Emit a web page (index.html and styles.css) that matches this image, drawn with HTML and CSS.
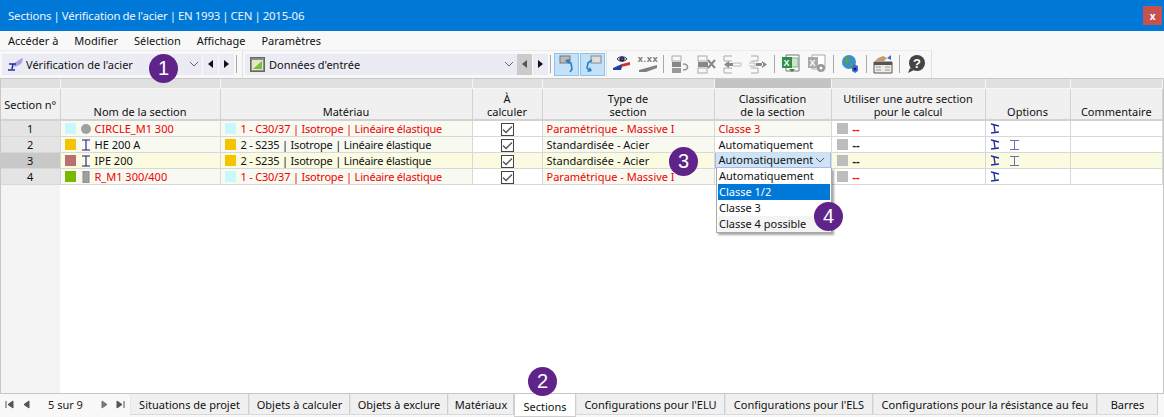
FILE: index.html
```html
<!DOCTYPE html>
<html lang="fr">
<head>
<meta charset="utf-8">
<title>Sections</title>
<link rel="stylesheet" href="styles.css">
</head>
<body>
<div class="app">
  <header class="titlebar">
    <span>Sections | Vérification de l'acier | EN 1993 | CEN | 2015-06</span>
    <span class="close">x</span>
  </header>
  <nav class="menu">
    <span>Accéder à</span><span>Modifier</span><span>Sélection</span><span>Affichage</span><span>Paramètres</span>
  </nav>
  <div class="toolbar">
    <div class="combo c1">
      <svg class="cico" width="16" height="14" viewBox="0 0 16 14"><path d="M5 7L14 1l1 1-2 5-6 3z" fill="#a6a2e6"/><path d="M1 7h7M5 7l-1 5M0 13h7" stroke="#2c2ca8" stroke-width="1.500" fill="none"/></svg>
      <span>Vérification de l'acier</span>
      <svg class="chev" width="10" height="6" viewBox="0 0 10 6"><path d="M1 1l4 4 4-4" stroke="#666" fill="none"/></svg>
    </div>
    <div class="arrow"><i class="tri l"></i></div>
    <div class="arrow"><i class="tri r"></i></div>
    <div class="sep s1"></div>
    <div class="edge"></div>
    <div class="combo c2">
      <svg class="cico" width="15" height="15" viewBox="0 0 15 15"><rect x=".5" y=".5" width="14" height="14" fill="#8a8f80" stroke="#666"/><rect x="2" y="3" width="11" height="10" fill="#dfe8c8"/><path d="M3 12L12 4v8z" fill="#7cbf3a"/></svg>
      <span>Données d'entrée</span>
      <svg class="chev" width="10" height="6" viewBox="0 0 10 6"><path d="M1 1l4 4 4-4" stroke="#666" fill="none"/></svg>
    </div>
    <div class="arrow dim"><i class="tri l"></i></div>
    <div class="arrow"><i class="tri r"></i></div>
    <div class="sep s2"></div>
    <div class="tbtn on"><svg width="20" height="20" viewBox="0 0 20 20"><rect x="3" y="2" width="10" height="7" fill="#bbb" stroke="#777"/><path d="M9 7l5 2 1 6-2 3" stroke="#2a7fc0" stroke-width="1.600" fill="none"/><path d="M8 6l5-1-1 5z" fill="#2a7fc0"/></svg></div>
    <div class="tbtn on"><svg width="20" height="20" viewBox="0 0 20 20"><rect x="8" y="2" width="10" height="7" fill="#ddd" stroke="#888"/><path d="M9 6L5 9l-1 5 3 3" stroke="#2a7fc0" stroke-width="1.600" fill="none"/><path d="M4 18l5-1-2-4z" fill="#2a7fc0"/></svg></div>
    <div class="tgroup">
      <div class="tico"><svg width="20" height="20" viewBox="0 0 20 20"><path d="M5 5c2-3 8-3 10 0-2 3-8 3-10 0z" fill="#d8dcec" stroke="#445"/><circle cx="10" cy="5" r="2.600" fill="#1e2a70"/><circle cx="10" cy="5" r="1.100" fill="#d02020"/><path d="M1 16v-2l9-4v3l-1 3z" fill="#2040a8"/><path d="M10 10l8-2v3l-9 2z" fill="#d83020"/></svg></div>
      <div class="tico"><span class="xxx">x.xx</span><svg class="under" width="20" height="7" viewBox="0 0 20 7"><path d="M1 7V5l18-5v3L8 7z" fill="#808080"/></svg></div>
      <div class="sep sn"></div>
      <div class="tico g"><svg width="20" height="20" viewBox="0 0 20 20"><rect x="2" y="2" width="9" height="5" fill="none" stroke="#aaa"/><rect x="2" y="8" width="9" height="5" fill="#888"/><rect x="2" y="14" width="9" height="5" fill="#999"/><path d="M13 10c6 0 6 6 0 6" stroke="#999" stroke-width="1.600" fill="none"/></svg></div>
      <div class="tico g"><svg width="20" height="20" viewBox="0 0 20 20"><rect x="2" y="2" width="9" height="5" fill="none" stroke="#aaa"/><rect x="2" y="8" width="10" height="5" fill="#888"/><rect x="2" y="14" width="9" height="5" fill="none" stroke="#aaa"/><path d="M12 6l7 8M19 6l-7 8" stroke="#888" stroke-width="2"/></svg></div>
      <div class="tico g"><svg width="20" height="20" viewBox="0 0 20 20"><path d="M10 2H2v5h8M10 14H2v5h8" fill="none" stroke="#aaa"/><path d="M11 9h8v3h-8" fill="none" stroke="#bbb"/><path d="M2 10.500l5-3.500v7zM6 9h5v3H6z" fill="#888"/></svg></div>
      <div class="tico g"><svg width="20" height="20" viewBox="0 0 20 20"><path d="M3 2h7v5H3M3 14h7v5H3" fill="none" stroke="#aaa"/><path d="M1 9h6v3H1" fill="none" stroke="#bbb"/><path d="M19 10.500l-5-3.500v7zM8 9h7v3H8z" fill="#888"/></svg></div>
      <div class="sep"></div>
      <div class="tico"><svg width="20" height="20" viewBox="0 0 20 20"><path d="M5 1h13v16H5z" fill="#fff" stroke="#777"/><rect x="9" y="4" width="8" height="9" fill="#cfe3cf" stroke="#8ab08a"/><rect x="1" y="3" width="10" height="11" fill="#2f8f4a"/><text x="2.500" y="12" class="xl">X</text><path d="M8 15h6l-3 3z" fill="#2f8f4a"/></svg></div>
      <div class="tico"><svg width="20" height="20" viewBox="0 0 20 20"><path d="M5 1h13v14H5z" fill="#fff" stroke="#aaa"/><rect x="1" y="3" width="10" height="11" fill="#aaa"/><text x="2.500" y="12" class="xl">X</text><circle cx="14" cy="14" r="4" fill="#999"/><circle cx="14" cy="14" r="1.500" fill="#fff"/></svg></div>
      <div class="sep"></div>
      <div class="tico"><svg width="20" height="20" viewBox="0 0 20 20"><circle cx="9" cy="8" r="7" fill="#3d8fc9"/><path d="M4 5l4-2 2 3-3 4zM11 9l4 1-2 5-2-1z" fill="#5fa04a"/><path d="M12 12l2-2 4 2v5l-3 2-3-2z" fill="#3a6fd8"/><circle cx="15" cy="15" r="1.600" fill="#1a1a60"/></svg></div>
      <div class="sep"></div>
      <div class="tico"><svg width="20" height="20" viewBox="0 0 20 20"><path d="M1 8h18v11H1z" fill="#f0ece4" stroke="#555"/><path d="M1 8h18v3H1z" fill="#555"/><path d="M3 13h5M12 13h5M3 16h5M12 16h5" stroke="#999"/><path d="M2 7l3-3 5-2 4 2-3 3z" fill="#c89870"/><path d="M14 4l4-3v5z" fill="#3a70c0"/></svg></div>
      <div class="sep"></div>
      <div class="tico"><svg width="20" height="20" viewBox="0 0 20 20"><circle cx="11" cy="9" r="8" fill="#444"/><path d="M4 14l-2 5 6-3z" fill="#444"/><text x="11" y="13.500" class="qm">?</text></svg></div>
    </div>
  </div>

  <main class="grid">
    <table class="sheet">
      <colgroup>
        <col class="w0"><col class="w1"><col class="w2"><col class="w3"><col class="w4"><col class="w5"><col class="w6"><col class="w7"><col>
      </colgroup>
      <thead>
        <tr class="band">
          <th></th><th></th><th></th><th></th><th></th><th class="sel"></th><th></th><th></th><th></th>
        </tr>
        <tr class="head">
          <th class="first">Section n°</th>
          <th>Nom de la section</th>
          <th>Matériau</th>
          <th>À<br>calculer</th>
          <th>Type de<br>section</th>
          <th>Classification<br>de la section</th>
          <th>Utiliser une autre section<br>pour le calcul</th>
          <th>Options</th>
          <th>Commentaire</th>
        </tr>
      </thead>
      <tbody>
        <tr class="err">
          <td class="num">1</td>
          <td class="tint"><div class="cell"><i class="sw cyan"></i><svg class="shape" width="12" height="12" viewBox="0 0 12 12"><circle cx="6" cy="6" r="5" fill="#a0a0a0"/></svg><span>CIRCLE_M1 300</span></div></td>
          <td class="tint"><div class="cell mat"><i class="sw cyan"></i><span>1 - C30/37 | Isotrope | Linéaire élastique</span></div></td>
          <td class="chk"><i class="box"><svg width="11" height="9" viewBox="0 0 11 9"><path d="M1 4.500l3 3 6-6" stroke="#555" stroke-width="1.300" fill="none"/></svg></i></td>
          <td class="tint txt">Paramétrique - Massive I</td>
          <td class="tint txt">Classe 3</td>
          <td><div class="cell alt"><i class="sw grey"></i><span>--</span></div></td>
          <td><div class="cell opts"><svg class="o1" width="10" height="11" viewBox="0 0 10 11"><path d="M1 1l8 2M4 2l1 7M1 10l8-1" stroke="#24309a" stroke-width="1.400" fill="none"/></svg></div></td>
          <td></td>
        </tr>
        <tr>
          <td class="num">2</td>
          <td class="tint"><div class="cell"><i class="sw gold"></i><svg class="shape" width="12" height="12" viewBox="0 0 12 12"><path d="M2 1h8M6 1v10M2 11h8" stroke="#1a1a90" stroke-width="1.100" fill="none"/></svg><span>HE 200 A</span></div></td>
          <td class="tint"><div class="cell mat"><i class="sw gold"></i><span>2 - S235 | Isotrope | Linéaire élastique</span></div></td>
          <td class="chk"><i class="box"><svg width="11" height="9" viewBox="0 0 11 9"><path d="M1 4.500l3 3 6-6" stroke="#555" stroke-width="1.300" fill="none"/></svg></i></td>
          <td class="tint txt">Standardisée - Acier</td>
          <td class="txt">Automatiquement</td>
          <td><div class="cell alt"><i class="sw grey"></i><span>--</span></div></td>
          <td><div class="cell opts"><svg class="o1" width="10" height="11" viewBox="0 0 10 11"><path d="M1 1l8 2M4 2l1 7M1 10l8-1" stroke="#24309a" stroke-width="1.400" fill="none"/></svg><svg class="o2" width="11" height="10" viewBox="0 0 11 10"><path d="M1 .5h9M5.500 .5v9M1 9.500h9" stroke="#6a70b0" fill="none"/></svg></div></td>
          <td></td>
        </tr>
        <tr class="cur">
          <td class="num">3</td>
          <td><div class="cell"><i class="sw rose"></i><svg class="shape" width="12" height="12" viewBox="0 0 12 12"><path d="M2 1h8M6 1v10M2 11h8" stroke="#1a1a90" stroke-width="1.100" fill="none"/></svg><span>IPE 200</span></div></td>
          <td><div class="cell mat"><i class="sw gold"></i><span>2 - S235 | Isotrope | Linéaire élastique</span></div></td>
          <td class="chk"><i class="box"><svg width="11" height="9" viewBox="0 0 11 9"><path d="M1 4.500l3 3 6-6" stroke="#555" stroke-width="1.300" fill="none"/></svg></i></td>
          <td class="txt">Standardisée - Acier</td>
          <td class="editing"><div class="edit"><span>Automatiquement</span><svg width="10" height="6" viewBox="0 0 10 6"><path d="M1 1l4 4 4-4" stroke="#555" fill="none"/></svg></div></td>
          <td><div class="cell alt"><i class="sw grey"></i><span>--</span></div></td>
          <td><div class="cell opts"><svg class="o1" width="10" height="11" viewBox="0 0 10 11"><path d="M1 1l8 2M4 2l1 7M1 10l8-1" stroke="#24309a" stroke-width="1.400" fill="none"/></svg><svg class="o2" width="11" height="10" viewBox="0 0 11 10"><path d="M1 .5h9M5.500 .5v9M1 9.500h9" stroke="#6a70b0" fill="none"/></svg></div></td>
          <td></td>
        </tr>
        <tr class="err">
          <td class="num">4</td>
          <td class="tint"><div class="cell"><i class="sw green"></i><svg class="shape" width="12" height="12" viewBox="0 0 12 12"><rect x="3" y="0" width="6" height="12" fill="#a0a0a0" stroke="#888"/></svg><span>R_M1 300/400</span></div></td>
          <td class="tint"><div class="cell mat"><i class="sw cyan"></i><span>1 - C30/37 | Isotrope | Linéaire élastique</span></div></td>
          <td class="chk"><i class="box"><svg width="11" height="9" viewBox="0 0 11 9"><path d="M1 4.500l3 3 6-6" stroke="#555" stroke-width="1.300" fill="none"/></svg></i></td>
          <td class="tint txt">Paramétrique - Massive I</td>
          <td></td>
          <td><div class="cell alt"><i class="sw grey"></i><span>--</span></div></td>
          <td><div class="cell opts"><svg class="o1" width="10" height="11" viewBox="0 0 10 11"><path d="M1 1l8 2M4 2l1 7M1 10l8-1" stroke="#24309a" stroke-width="1.400" fill="none"/></svg></div></td>
          <td></td>
        </tr>
      </tbody>
    </table>
    <div class="rest"><div class="gutter"></div></div>
  </main>

  <footer class="tabs">
    <div class="pager">
      <svg width="9" height="9" viewBox="0 0 9 9"><path d="M1 1v7M8 1L3 4.500 8 8z" stroke="#555" fill="#555"/></svg>
      <svg class="p2" width="7" height="9" viewBox="0 0 7 9"><path d="M6 1L1 4.500 6 8z" fill="#555" stroke="#555"/></svg>
      <span>5 sur 9</span>
      <svg class="p3" width="7" height="9" viewBox="0 0 7 9"><path d="M1 1l5 3.500L1 8z" fill="#777" stroke="#777"/></svg>
      <svg class="p4" width="9" height="9" viewBox="0 0 9 9"><path d="M8 1v7M1 1l5 3.500L1 8z" stroke="#555" fill="#555"/></svg>
    </div>
    <div class="tab t1">Situations de projet</div>
    <div class="tab t2">Objets à calculer</div>
    <div class="tab t3">Objets à exclure</div>
    <div class="tab t4">Matériaux</div>
    <div class="tab active t5">Sections</div>
    <div class="tab t6">Configurations pour l'ELU</div>
    <div class="tab t7">Configurations pour l'ELS</div>
    <div class="tab t8">Configurations pour la résistance au feu</div>
    <div class="tab t9">Barres</div>
  </footer>
</div>

<ul class="dropdown">
  <li>Automatiquement</li>
  <li class="picked">Classe 1/2</li>
  <li>Classe 3</li>
  <li class="hover">Classe 4 possible</li>
</ul>
<span class="badge b1">1</span>
<span class="badge b2">2</span>
<span class="badge b3">3</span>
<span class="badge b4">4</span>
</body>
</html>
```
FILE: styles.css
```css
* { box-sizing: border-box; }
html, body { margin: 0; height: 100%; overflow: hidden; }
body { font-family: "Noto Sans", sans-serif; font-size: 11px; color: #111; background: #f8f8f8; position: relative; }
.app { display: flex; flex-direction: column; height: 417px; }

.titlebar { height: 31px; flex: none; background: #0078d7; color: #f0f6fc; font-size: 11.4px; letter-spacing: -.15px; word-spacing: -.7px; display: flex; align-items: center; justify-content: space-between; padding: 0 0 0 8px; }
.close { width: 19px; height: 19px; margin: 0 2px 0 0; background: #c75050; color: #fff; font-weight: 700; font-size: 10px; display: flex; align-items: center; justify-content: center; }

.menu { height: 19px; flex: none; display: flex; gap: 16px; align-items: center; padding: 0 0 0 8px; background: #f8f8f8; }

.toolbar { height: 28px; flex: none; display: flex; align-items: center; padding: 2px 0 3px 2px; width: 932px; border-right: 1px solid #e2e2e2; border-top: 1px solid #ececec; }
.combo { height: 21px; background: #ebebf4; display: flex; align-items: center; position: relative; }
.combo span { margin-left: 4px; }
.c1 { width: 200px; padding-left: 6px; }
.c1 span { margin-left: 2px; }
.c2 { width: 272px; padding-left: 5px; }
.chev { position: absolute; right: 3px; top: 7px; }
.cico { flex: none; }
.arrow { width: 15px; height: 21px; margin-left: 1px; background: #ebebf4; display: flex; align-items: center; justify-content: center; }
.arrow.dim { background: #cbcbcb; margin-left: 0; }
.tri { width: 0; height: 0; border-top: 4px solid transparent; border-bottom: 4px solid transparent; }
.tri.l { border-right: 5px solid #111; }
.tri.r { border-left: 5px solid #111; }
.dim .tri.l { border-right-color: #555; }
.sep { width: 1px; height: 18px; background: #a8a8a8; flex: none; margin: 0 3px; }
.sn { margin-left: 2px; }
.s1 { margin: 0 0 0 2px; }
.s2 { margin: 0 3px 0 2px; }
.edge { width: 1px; height: 27px; background: #e2e2e2; margin: 0 2px 0 5px; }
.tbtn { width: 25px; height: 23px; margin-right: 1px; background: #c4e1f8; border: 1px solid #8cc4f0; display: flex; align-items: center; justify-content: center; }
.tgroup { display: flex; align-items: center; border-left: 1px solid #e2e2e2; height: 26px; padding-left: 2px; }
.tico { width: 26px; height: 20px; display: flex; align-items: center; justify-content: center; position: relative; flex: none; }
.xxx { position: absolute; top: 0; left: 2px; right: 2px; text-align: center; font-size: 9px; font-weight: 700; letter-spacing: .6px; color: #808080; line-height: 10px; }
.under { position: absolute; bottom: 2px; left: 3px; }
.xl { font: 700 9px "Liberation Sans", sans-serif; fill: #fff; }
.qm { font: 700 13px "Liberation Sans", sans-serif; fill: #fff; text-anchor: middle; }

.grid { flex: 1; min-height: 0; display: flex; flex-direction: column; border: 1px solid #c8c8c8; background: #fff; }
.sheet { border-collapse: collapse; table-layout: fixed; width: 1162px; flex: none; }
.w0 { width: 59px; } .w1 { width: 160px; } .w2 { width: 252px; } .w3 { width: 70px; }
.w4 { width: 172px; } .w5 { width: 117px; } .w6 { width: 154px; } .w7 { width: 85px; }
.band th { height: 9px; padding: 0; background: #e0e0e0; border-right: 1px solid #f6f6f6; }
.band th.sel { background: #c4c4c4; }
.head th { height: 32px; padding: 0 0 1px; background: #f0f0f0; font-weight: 400; font-size: 11px; line-height: 13px; vertical-align: bottom; text-align: center; border-right: 1px solid #d2d2d2; border-bottom: 2px solid #d2d2d2; border-top: 1px solid #f6f6f6; }
.head th.first { vertical-align: middle; background: #f0f0f0; padding: 2px 0 0; }
tbody td { height: 16px; padding: 0; border-right: 1px solid #d8d8d8; border-bottom: 1px solid #d8d8d8; background: #fff; white-space: nowrap; overflow: hidden; line-height: 14px; }
td.num { text-align: center; background: #e4e4e4; }
td.tint { background: #f8faf2; }
td.txt { padding-left: 4px; }
.err td, .err .txt { color: #f00000; }
.err td.num, .err td.chk { color: #111; }
.cur td { background: #fbfbe2; }
.cur td.num { background: #c8c8c8; }
.cur td.chk { background: #fbfbe2; }
.cell { display: flex; align-items: center; height: 15px; padding-left: 4px; }
.sw { width: 11px; height: 11px; flex: none; display: block; }
.cyan { background: #c8f8f8; } .gold { background: #f5c400; } .rose { background: #b87070; } .green { background: #7ab800; } .grey { background: #bdbdbd; }
.shape { margin-left: 4px; flex: none; }
.cell .shape + span { margin-left: 3px; }
.mat span { margin-left: 5px; letter-spacing: -.2px; }
.alt { padding-left: 5px; }
.alt span { margin-left: 5px; font-weight: 700; }
.opts { padding-left: 4px; }
.o2 { margin-left: 9px; }
td.chk { text-align: center; }
.box { width: 13px; height: 13px; border: 1px solid #444; background: #fff; display: inline-flex; align-items: center; justify-content: center; vertical-align: top; margin-top: 1px; }
td.editing { padding: 0; }
.edit { height: 16px; margin: -1px 0 0 0; border: 1px solid #b4b4e8; background: #cce4f7; display: flex; align-items: center; justify-content: space-between; padding: 0 5px 0 3px; line-height: 14px; }
.rest { flex: 1; min-height: 0; }
.gutter { width: 59px; height: 100%; background: #f4f4f4; }

.tabs { height: 23px; flex: none; display: flex; padding-bottom: 2px; background: #f8f8f8; }
.pager { width: 130px; flex: none; display: flex; align-items: center; padding-left: 5px; color: #222; }
.pager span { margin-left: 18px; width: 38px; }
.p2 { margin-left: 9px; }
.p3 { margin-left: 15px; }
.p4 { margin-left: 8px; }
.tab { height: 21px; background: #f0f0f0; border-right: 1px solid #cfcfcf; border-left: 1px solid #e6e6e6; border-bottom: 1px solid #d8d8d8; display: flex; align-items: center; justify-content: center; flex: none; }
.tab.active { background: #fff; height: 23px; border: 1px solid #cfcfcf; border-top: 0; padding-top: 3px; margin-bottom: -2px; }
.t1 { width: 119px; } .t2 { width: 101px; } .t3 { width: 98px; } .t4 { width: 66px; } .t5 { width: 62px; }
.t6 { width: 149px; } .t7 { width: 148px; } .t8 { width: 224px; } .t9 { width: 61px; }

.dropdown { position: absolute; left: 716px; top: 168px; width: 116px; height: 65px; margin: 0; padding: 0 1px 1px; list-style: none; background: #fff; border: 1px solid #a8a8a8; border-top: 0; box-shadow: 2px 2px 2px rgba(0,0,0,.35); }
.dropdown li { height: 16px; line-height: 15px; padding-left: 1px; }
.dropdown .picked { background: #0078d7; color: #fff; }
.dropdown .hover { background: #f4f4f4; }

.badge { position: absolute; width: 29px; height: 29px; border-radius: 50%; background: #5f2389; color: #fff; font-size: 20px; line-height: 29px; text-align: center; font-family: "Liberation Sans", sans-serif; }
.b1 { left: 149px; top: 54px; }
.b2 { left: 528px; top: 367px; }
.b3 { left: 669px; top: 147px; }
.b4 { left: 814px; top: 202px; }
```
